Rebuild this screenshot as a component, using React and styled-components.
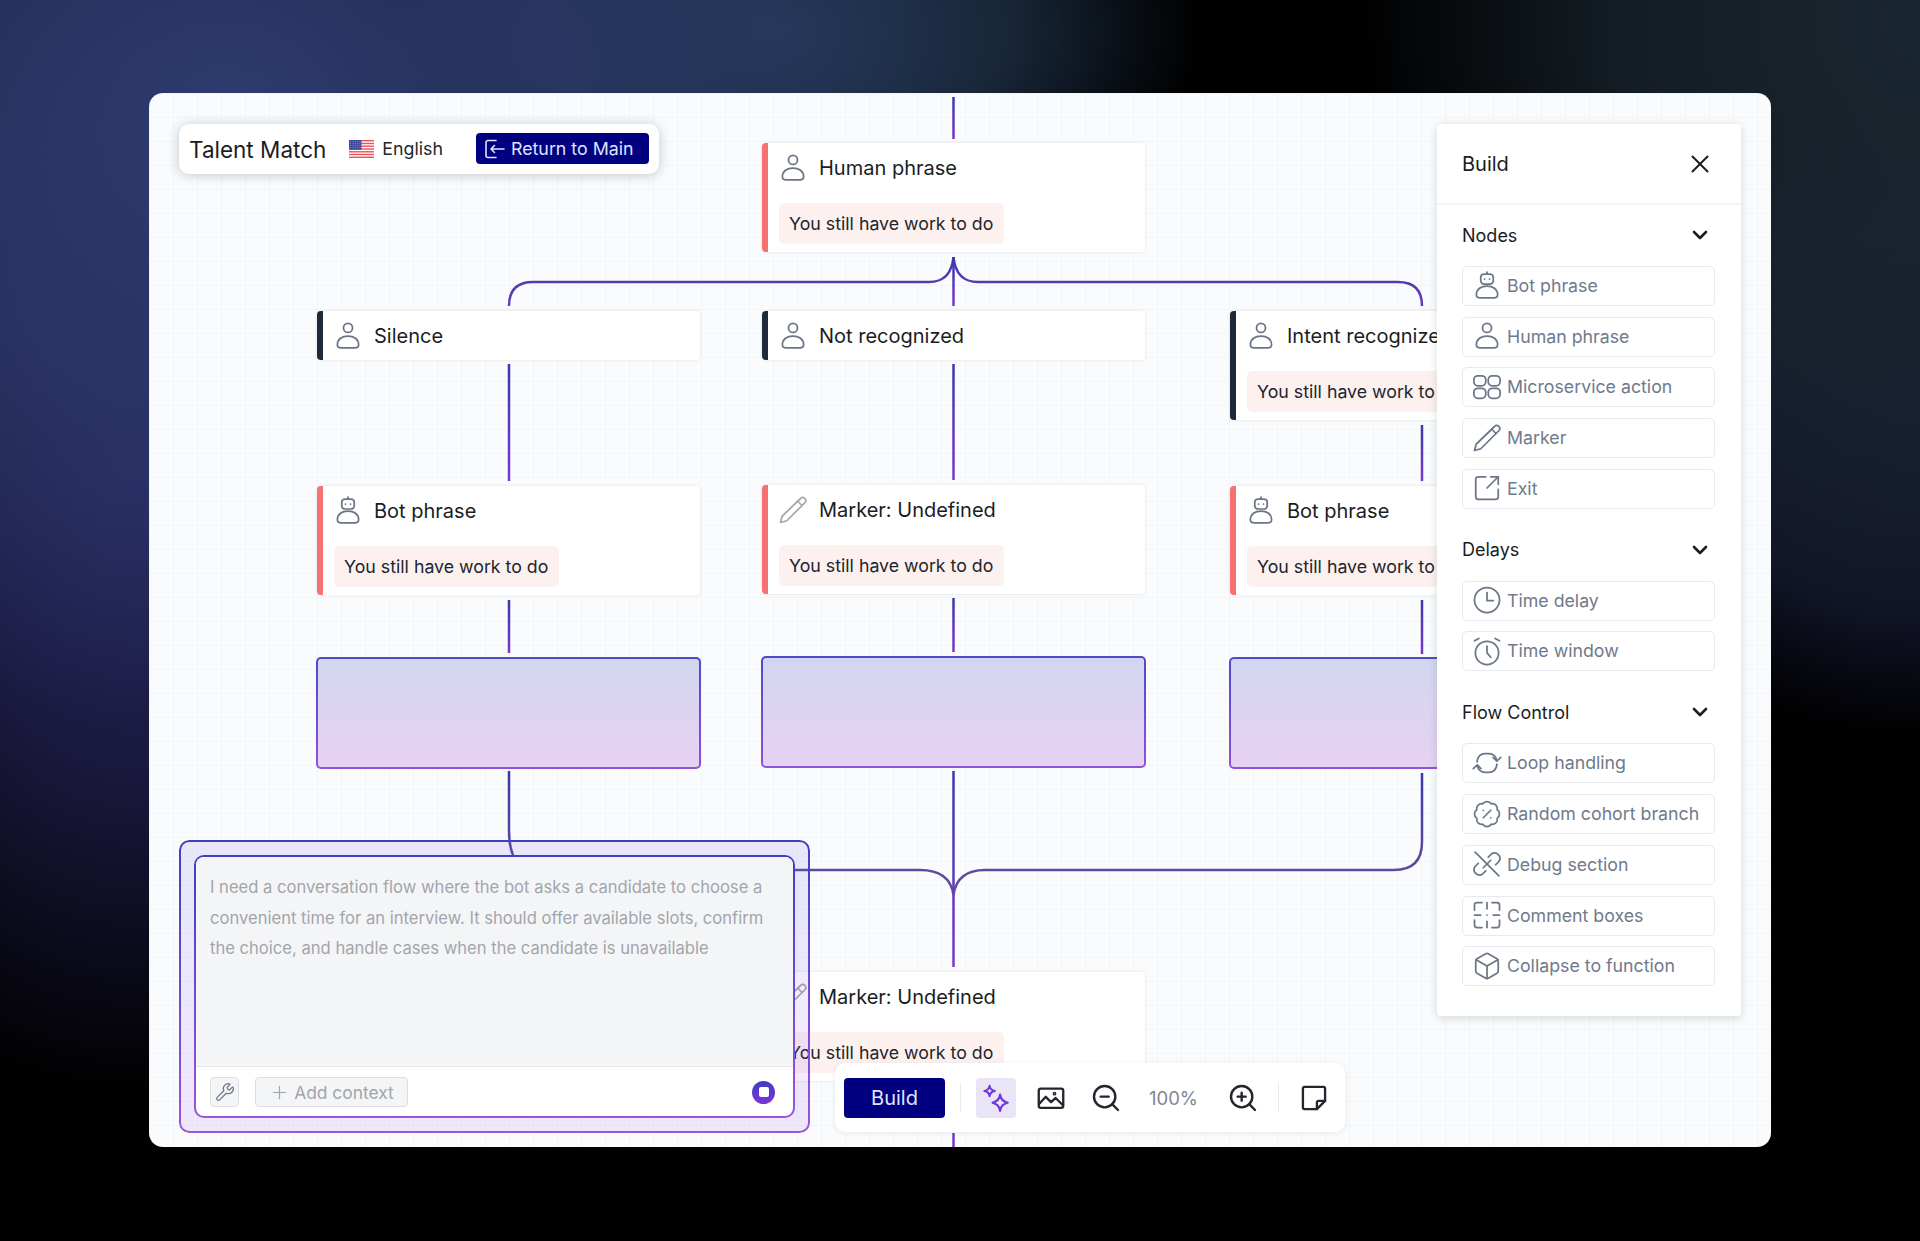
import styled, { createGlobalStyle } from "styled-components";
import { BadgePercent, Box, ChevronDown, Plus, SquareArrowOutUpRight, Wrench, X, ZoomIn, ZoomOut } from "lucide-react";

const GlobalStyle = createGlobalStyle`
    html, body {
        margin: 0;
        padding: 0;
        background: #000;
    }
    body {
        font-family: Inter, "Liberation Sans", sans-serif;
        color: #1a1d24;
    }
    * {
        box-sizing: border-box;
    }
`

const Page = styled.div`
    width: 1920px;
    height: 1241px;
    padding: 93px 149px 94px;
    background:
        radial-gradient(ellipse 760px 620px at 230px 110px, #2d3b6e 0%, rgba(45, 59, 110, 0.75) 45%, rgba(45, 59, 110, 0) 100%),
        radial-gradient(ellipse 420px 620px at 130px 480px, #25245a 0%, rgba(37, 36, 90, 0.7) 45%, rgba(37, 36, 90, 0) 100%),
        radial-gradient(ellipse 420px 240px at 780px 30px, #223650 0%, rgba(34, 54, 80, 0.7) 55%, rgba(34, 54, 80, 0) 100%),
        radial-gradient(ellipse 560px 620px at 1920px 20px, #1a2630 0%, rgba(26, 38, 48, 0.75) 55%, rgba(26, 38, 48, 0) 100%),
        radial-gradient(ellipse 360px 320px at 1920px 420px, #14182f 0%, rgba(20, 24, 47, 0.8) 60%, rgba(20, 24, 47, 0) 100%),
        #000;
`

const Canvas = styled.div`
    position: relative;
    width: 1622px;
    height: 1054px;
    border-radius: 14px;
    overflow: hidden;
    background-color: #f9fbfc;
    background-image:
        linear-gradient(#f3f5f7 1px, transparent 1px),
        linear-gradient(90deg, #f3f5f7 1px, transparent 1px);
    background-size: 24px 24px;
`

const Wires = styled.svg`
    position: absolute;
    inset: 0;
    width: 100%;
    height: 100%;
`

const Node = styled.div`
    position: absolute;
    left: ${props => props.$left}px;
    top: ${props => props.$top}px;
    width: 383px;
    background: #fff;
    border-left: 6px solid ${props => props.$accent};
    border-radius: 4px;
    box-shadow: 0 0 3px rgba(30, 41, 59, 0.12);
`

const NodeHead = styled.div`
    display: flex;
    align-items: center;
    gap: 11px;
    height: 49px;
    padding-left: 10px;
    font-size: 20px;
    white-space: nowrap;
    color: #1a1d24;
    svg {
        width: 30px;
        height: 30px;
        flex: none;
        color: ${props => props.$faded ? "#a3a8b0" : "#6b7486"};
    }
`

const Pill = styled.div`
    display: inline-block;
    margin: 11px 0 8px 11px;
    height: 41px;
    padding: 0 11px 0 10px;
    line-height: 41px;
    font-size: 17.75px;
    white-space: nowrap;
    color: #22252c;
    background: #fdf1f0;
    border-radius: 5px;
`

const Placeholder = styled.div`
    position: absolute;
    left: ${props => props.$left}px;
    top: ${props => props.$top}px;
    width: 385px;
    height: 112px;
    border: 2px solid transparent;
    border-radius: 5px;
    background:
        linear-gradient(#d3d6f0, #e6d2f2) padding-box,
        linear-gradient(#4f49c8, #8f52dc) border-box;
`

const TopBar = styled.div`
    position: absolute;
    left: 30px;
    top: 31px;
    display: flex;
    align-items: center;
    width: 480px;
    height: 50px;
    padding: 0 10px 1px;
    background: #fff;
    border-radius: 10px;
    box-shadow: 0 1px 12px rgba(30, 41, 59, 0.24);
`

const Brand = styled.div`
    padding-top: 1px;
    font-size: 22.5px;
    color: #1a1d24;
    margin-right: 23px;
`

const Language = styled.div`
    display: flex;
    align-items: center;
    gap: 8px;
    font-size: 17.8px;
    color: #23262d;
`

const ReturnButton = styled.button`
    display: flex;
    align-items: center;
    gap: 5px;
    margin-left: auto;
    width: 173px;
    height: 31px;
    padding: 0 0 0 6px;
    border: 0;
    border-radius: 4px;
    background: #000080;
    color: #dfe4ff;
    font: inherit;
    font-size: 17.8px;
    white-space: nowrap;
    svg {
        width: 24px;
        height: 24px;
        flex: none;
    }
`

const SidePanel = styled.aside`
    position: absolute;
    right: 30px;
    top: 31px;
    width: 304px;
    height: 892px;
    background: #fff;
    border-radius: 4px;
    box-shadow: 0 2px 10px rgba(30, 41, 59, 0.16);
`

const PanelHead = styled.div`
    display: flex;
    align-items: center;
    justify-content: space-between;
    height: 81px;
    padding: 1px 26px 0 25px;
    font-size: 20px;
    border-bottom: 2px solid #f2f4f6;
`

const Section = styled.section`
    padding: ${props => props.$first ? "15px" : "26px"} 26px 0 25px;
`

const SectionHead = styled.div`
    display: flex;
    align-items: center;
    justify-content: space-between;
    height: 30px;
    padding-right: 3px;
    margin-bottom: 16px;
    font-size: 18px;
    color: #1a1d24;
`

const ItemList = styled.div`
    display: flex;
    flex-direction: column;
    gap: 10.7px;
`

const Item = styled.div`
    display: flex;
    align-items: center;
    gap: 5px;
    height: 40px;
    padding: 0 0 1px 9px;
    font-size: 17.75px;
    white-space: nowrap;
    color: #6f7a8c;
    border: 1px solid #e7e9ed;
    border-radius: 5px;
    svg {
        width: 30px;
        height: 30px;
        flex: none;
        color: #6b7789;
    }
`

const Chat = styled.div`
    position: absolute;
    left: 30px;
    bottom: 14px;
    width: 631px;
    height: 293px;
    padding: 15px;
    border-radius: 10px;
    background: linear-gradient(rgba(79, 70, 229, 0.11), rgba(147, 51, 234, 0.1));
    &::before {
        content: "";
        position: absolute;
        inset: 0;
        padding: 1.8px;
        border-radius: inherit;
        background: linear-gradient(#3f3ec0, #9a55dc);
        mask: linear-gradient(#000 0 0) content-box exclude, linear-gradient(#000 0 0);
    }
`

const ChatInner = styled.div`
    position: relative;
    display: flex;
    flex-direction: column;
    height: 100%;
    overflow: hidden;
    border: 2px solid transparent;
    border-radius: 10px;
    background:
        linear-gradient(#fff, #fff) padding-box,
        linear-gradient(#3f3ec0, #9a55dc) border-box;
`

const Prompt = styled.div`
    flex: 1;
    padding: 15px 14px;
    font-size: 16.6px;
    line-height: 30.5px;
    color: #a2a5ab;
    background: #f4f5f7;
`

const ChatFoot = styled.div`
    display: flex;
    align-items: center;
    gap: 16px;
    height: 50px;
    padding: 1px 18px 0 14px;
    border-top: 1px solid #e6e7ea;
`

const ToolKey = styled.div`
    display: flex;
    align-items: center;
    justify-content: center;
    gap: 4px;
    width: ${props => props.$width}px;
    height: 30px;
    font-size: 17.4px;
    color: #a2a5ab;
    background: #f4f5f7;
    border: 1px solid #dcdee2;
    border-radius: 4px;
    svg {
        width: ${props => props.$dark ? 20 : 21}px;
        height: ${props => props.$dark ? 20 : 21}px;
        flex: none;
        color: ${props => props.$dark ? "#6b7486" : "#a2a5ab"};
    }
`

const StopButton = styled.div`
    display: flex;
    align-items: center;
    justify-content: center;
    width: 23px;
    height: 23px;
    margin-left: auto;
    border-radius: 50%;
    background: linear-gradient(#3f3ec0, #7c35d8);
    &::after {
        content: "";
        width: 10px;
        height: 10px;
        border-radius: 2px;
        background: #fff;
    }
`

const BottomBar = styled.div`
    position: absolute;
    left: 686px;
    bottom: 15px;
    display: flex;
    align-items: center;
    gap: 15px;
    width: 510px;
    height: 69px;
    padding-left: 9px;
    background: #fff;
    border-radius: 10px;
    box-shadow: 0 1px 6px rgba(30, 41, 59, 0.08);
`

const BuildButton = styled.button`
    width: 101px;
    height: 40px;
    border: 0;
    border-radius: 4px;
    background: #000080;
    color: #dfe4ff;
    font: inherit;
    font-size: 20px;
`

const Divider = styled.div`
    width: 1px;
    height: 29px;
    background: #e8eaed;
`

const ToolIcon = styled.div`
    display: flex;
    align-items: center;
    justify-content: center;
    width: 40px;
    height: 40px;
    border-radius: 4px;
    background: ${props => props.$active ? "#e9e4f6" : "transparent"};
    color: #23262f;
    svg {
        width: ${props => props.$large ? 32 : 28}px;
        height: ${props => props.$large ? 32 : 28}px;
    }
`

const Zoom = styled.div`
    width: 67px;
    padding-right: 2px;
    text-align: center;
    font-size: 18.5px;
    color: #808694;
`

const Glyph = ({ children, width = 1.4 }) => (
    <svg viewBox="0 0 24 24" fill="none" stroke="currentColor" strokeWidth={width} strokeLinecap="round" strokeLinejoin="round">
        {children}
    </svg>
)

const body = "M3.5 19c0-4.4 3.8-7 8.500-7s8.500 2.600 8.500 7c0 1.800-1.400 2.500-3 2.500H6.500c-1.600 0-3-.7-3-2.500z"

const HumanIcon = () => (
    <Glyph>
        <circle cx="12" cy="5.500" r="3.600" />
        <path d={body} />
    </Glyph>
)

const BotIcon = () => (
    <Glyph>
        <path d="M12 .8v1.600" />
        <rect x="7" y="2.400" width="10" height="8" rx="2.600" />
        <path d="M10 6.400h.01M14 6.400h.01" />
        <path d={body} />
    </Glyph>
)

const GridIcon = () => (
    <Glyph>
        <rect x="1.500" y="3" width="9.500" height="8" rx="3.200" />
        <rect x="13" y="3" width="9.500" height="8" rx="3.200" />
        <rect x="1.500" y="13" width="9.500" height="8" rx="3.200" />
        <rect x="13" y="13" width="9.500" height="8" rx="3.200" />
    </Glyph>
)

const PencilIcon = () => (
    <Glyph>
        <path d="M18 2.800a2.400 2.400 0 0 1 3.500 3.400L7 20.600l-5 1.400 1.300-5z" />
        <path d="M15.800 5l3.400 3.400" />
    </Glyph>
)

const ClockIcon = () => (
    <Glyph>
        <circle cx="12" cy="12" r="10" />
        <path d="M12 6v6.500h5" />
    </Glyph>
)

const AlarmIcon = () => (
    <Glyph>
        <circle cx="12" cy="13.500" r="9.300" />
        <path d="M12 8v5.500l3 3.500" />
        <path d="M2 3.800L5.500 2M22 3.800L18.500 2" />
    </Glyph>
)

const LoopIcon = () => (
    <Glyph>
        <path d="M4 11c.6-4 3-6.500 6.500-6.500h3c3.200 0 5.500 2 6.300 5.500" />
        <path d="M23 7.500l-3.200 3-3-3" />
        <path d="M20 13c-.6 4-3 6.500-6.500 6.500h-3c-3.200 0-5.500-2-6.300-5.500" />
        <path d="M1 16.500l3.200-3 3 3" />
    </Glyph>
)

const UnlinkIcon = () => (
    <Glyph>
        <path d="M13 6.500l2.500-2.500a4.300 4.300 0 0 1 6 6L19 12.500" />
        <path d="M11 17.500L8.500 20a4.300 4.300 0 0 1-6-6L5 11.500" />
        <path d="M9 15l6-6" />
        <path d="M2.500 2.500l19 19" />
    </Glyph>
)

const CommentIcon = () => (
    <Glyph>
        <path d="M2 8V4a2 2 0 0 1 2-2h4M16 2h4a2 2 0 0 1 2 2v4M22 16v4a2 2 0 0 1-2 2h-4M8 22H4a2 2 0 0 1-2-2v-4" />
        <path d="M12 2v5M12 17v5M2 12h5M17 12h5M12 12h.01" />
    </Glyph>
)

const ReturnIcon = () => (
    <Glyph width={1.6}>
        <path d="M14 3.500H6a2 2 0 0 0-2 2v13a2 2 0 0 0 2 2h8" />
        <path d="M22 12H9M12.500 8.500L9 12l3.500 3.500" />
    </Glyph>
)

const SparkleIcon = () => (
    <svg viewBox="0 0 24 24" fill="none" stroke="#7136e0" strokeWidth="1.800" strokeLinejoin="round">
        <path d="M15.500 9C16 13 17.500 15 22 16 17.500 17 16 19 15.500 23 15 19 13.500 17 9 16 13.500 15 15 13 15.500 9z" />
        <path d="M6.500 1.500C6.800 4.300 7.800 5.400 11 6 7.800 6.600 6.800 7.700 6.500 10.500 6.200 7.700 5.200 6.600 2 6 5.200 5.400 6.200 4.300 6.500 1.500z" />
    </svg>
)

const ImageIcon = () => (
    <Glyph width={2}>
        <rect x="1.500" y="4" width="21" height="16.500" rx="1.800" />
        <path d="M2 17l5.500-6 4.500 4.500 4-3.500 6 6" />
        <circle cx="15" cy="8.300" r=".6" />
    </Glyph>
)

const NoteIcon = () => (
    <Glyph width={2}>
        <path d="M4 2.500h16A1.500 1.500 0 0 1 21.500 4v10.500l-7 7H4A1.500 1.500 0 0 1 2.500 20V4A1.500 1.500 0 0 1 4 2.500z" />
        <path d="M21.500 14.500h-5.500a1.500 1.500 0 0 0-1.500 1.500v5.500" />
    </Glyph>
)

const FlagIcon = () => (
    <svg width="25" height="18" viewBox="0 0 25 18">
        <rect width="25" height="18" fill="#fff" />
        {[0, 2.800, 5.500, 8.300, 11.100, 13.800, 16.600].map(y => (
            <rect key={y} y={y} width="25" height="1.400" fill="#ef4f56" />
        ))}
        <rect width="12.500" height="9.700" fill="#3f4a9a" />
        {[1.500, 3.500, 5.500, 7.500].map(y => [1.500, 4, 6.500, 9, 11].map(x => (
            <circle key={`${x}-${y}`} cx={x} cy={y} r=".45" fill="#c9cdec" />
        )))}
    </svg>
)

const NODES = [
    { left: 613, top: 50, title: "Human phrase", icon: HumanIcon, accent: "#f87171", note: true },
    { left: 168, top: 218, title: "Silence", icon: HumanIcon, accent: "#1e293b" },
    { left: 613, top: 218, title: "Not recognized", icon: HumanIcon, accent: "#1e293b" },
    { left: 1081, top: 218, title: "Intent recognized", icon: HumanIcon, accent: "#1e293b", note: true },
    { left: 168, top: 393, title: "Bot phrase", icon: BotIcon, accent: "#f87171", note: true },
    { left: 613, top: 392, title: "Marker: Undefined", icon: PencilIcon, accent: "#f87171", note: true, faded: true },
    { left: 1081, top: 393, title: "Bot phrase", icon: BotIcon, accent: "#f87171", note: true },
    { left: 613, top: 879, title: "Marker: Undefined", icon: PencilIcon, accent: "#f87171", note: true, faded: true },
]

const BOXES = [
    { left: 167, top: 564 },
    { left: 612, top: 563 },
    { left: 1080, top: 564 },
]

const PURPLE = "#7a38cc"
const BRANCH = "#6b3cb8"
const MUTED = "#5f4b9d"

// page coordinates: y1/y2 drive the blue to purple fade of each wire
const WIRES = [
    { d: "M953.500 97V139", y1: 97, y2: 139, to: PURPLE },
    { d: "M953.500 257V306", y1: 257, y2: 306, to: PURPLE },
    { d: "M953.500 257Q951 282 929 282H533Q509 282 509 306", y1: 257, y2: 306, to: BRANCH },
    { d: "M953.500 257Q956 282 978 282H1398Q1422 282 1422 306", y1: 257, y2: 306, to: BRANCH },
    { d: "M509 364V481", y1: 364, y2: 481, to: PURPLE },
    { d: "M953.500 364V480", y1: 364, y2: 480, to: PURPLE },
    { d: "M1422 425V481", y1: 425, y2: 481, to: PURPLE },
    { d: "M509 600V653", y1: 600, y2: 653, to: PURPLE },
    { d: "M953.500 598V652", y1: 598, y2: 652, to: PURPLE },
    { d: "M1422 600V654", y1: 600, y2: 654, to: PURPLE },
    { d: "M509 771V830Q509 870 535 870H920Q950 870 953.500 895", y1: 771, y2: 870, to: MUTED },
    { d: "M953.500 771V967", y1: 771, y2: 967, to: PURPLE },
    { d: "M1422 773V842Q1422 870 1394 870H985Q957 870 953.500 895", y1: 773, y2: 870, to: MUTED },
    { d: "M953.500 1133V1147", y1: 1000, y2: 1147, to: PURPLE },
]

const PANEL = [
    {
        title: "Nodes", items: [
            ["Bot phrase", BotIcon],
            ["Human phrase", HumanIcon],
            ["Microservice action", GridIcon],
            ["Marker", PencilIcon],
            ["Exit", SquareArrowOutUpRight],
        ]
    },
    {
        title: "Delays", items: [
            ["Time delay", ClockIcon],
            ["Time window", AlarmIcon],
        ]
    },
    {
        title: "Flow Control", items: [
            ["Loop handling", LoopIcon],
            ["Random cohort branch", BadgePercent],
            ["Debug section", UnlinkIcon],
            ["Comment boxes", CommentIcon],
            ["Collapse to function", Box],
        ]
    },
]

export default function App() {
    return (
        <Page>
            <GlobalStyle />
            <Canvas>
                <Wires viewBox="149 93 1622 1054">
                    <defs>
                        {WIRES.map((wire, i) => (
                            <linearGradient key={i} id={`wire${i}`} gradientUnits="userSpaceOnUse" x1="0" x2="0" y1={wire.y1} y2={wire.y2}>
                                <stop offset="0" stopColor="#3b38ad" />
                                <stop offset="1" stopColor={wire.to} />
                            </linearGradient>
                        ))}
                    </defs>
                    {WIRES.map((wire, i) => (
                        <path key={i} d={wire.d} fill="none" stroke={`url(#wire${i})`} strokeWidth="2.500" />
                    ))}
                </Wires>

                {NODES.map(node => (
                    <Node key={`${node.left}-${node.top}`} $left={node.left} $top={node.top} $accent={node.accent}>
                        <NodeHead $faded={node.faded}>
                            <node.icon />
                            {node.title}
                        </NodeHead>
                        {node.note && <Pill>You still have work to do</Pill>}
                    </Node>
                ))}

                {BOXES.map(box => (
                    <Placeholder key={box.left} $left={box.left} $top={box.top} />
                ))}

                <TopBar>
                    <Brand>Talent Match</Brand>
                    <Language>
                        <FlagIcon />
                        English
                    </Language>
                    <ReturnButton>
                        <ReturnIcon />
                        Return to Main
                    </ReturnButton>
                </TopBar>

                <SidePanel>
                    <PanelHead>
                        Build
                        <X size={30} strokeWidth={1.6} color="#1a1d24" />
                    </PanelHead>
                    {PANEL.map((section, i) => (
                        <Section key={section.title} $first={i === 0}>
                            <SectionHead>
                                {section.title}
                                <ChevronDown size={24} strokeWidth={2.6} color="#1a1d24" />
                            </SectionHead>
                            <ItemList>
                                {section.items.map(([label, Icon]) => (
                                    <Item key={label}>
                                        <Icon strokeWidth={1.4} />
                                        {label}
                                    </Item>
                                ))}
                            </ItemList>
                        </Section>
                    ))}
                </SidePanel>

                <Chat>
                    <ChatInner>
                        <Prompt>
                            I need a conversation flow where the bot asks a candidate to choose a convenient time for an interview. It should offer available slots, confirm the choice, and handle cases when the candidate is unavailable
                        </Prompt>
                        <ChatFoot>
                            <ToolKey $width={29} $dark>
                                <Wrench strokeWidth={1.4} />
                            </ToolKey>
                            <ToolKey $width={153}>
                                <Plus strokeWidth={1.4} />
                                Add context
                            </ToolKey>
                            <StopButton />
                        </ChatFoot>
                    </ChatInner>
                </Chat>

                <BottomBar>
                    <BuildButton>Build</BuildButton>
                    <Divider />
                    <ToolIcon $active><SparkleIcon /></ToolIcon>
                    <ToolIcon><ImageIcon /></ToolIcon>
                    <ToolIcon $large><ZoomOut strokeWidth={1.8} /></ToolIcon>
                    <Zoom>100%</Zoom>
                    <ToolIcon $large><ZoomIn strokeWidth={1.8} /></ToolIcon>
                    <Divider />
                    <ToolIcon><NoteIcon /></ToolIcon>
                </BottomBar>
            </Canvas>
        </Page>
    )
}
